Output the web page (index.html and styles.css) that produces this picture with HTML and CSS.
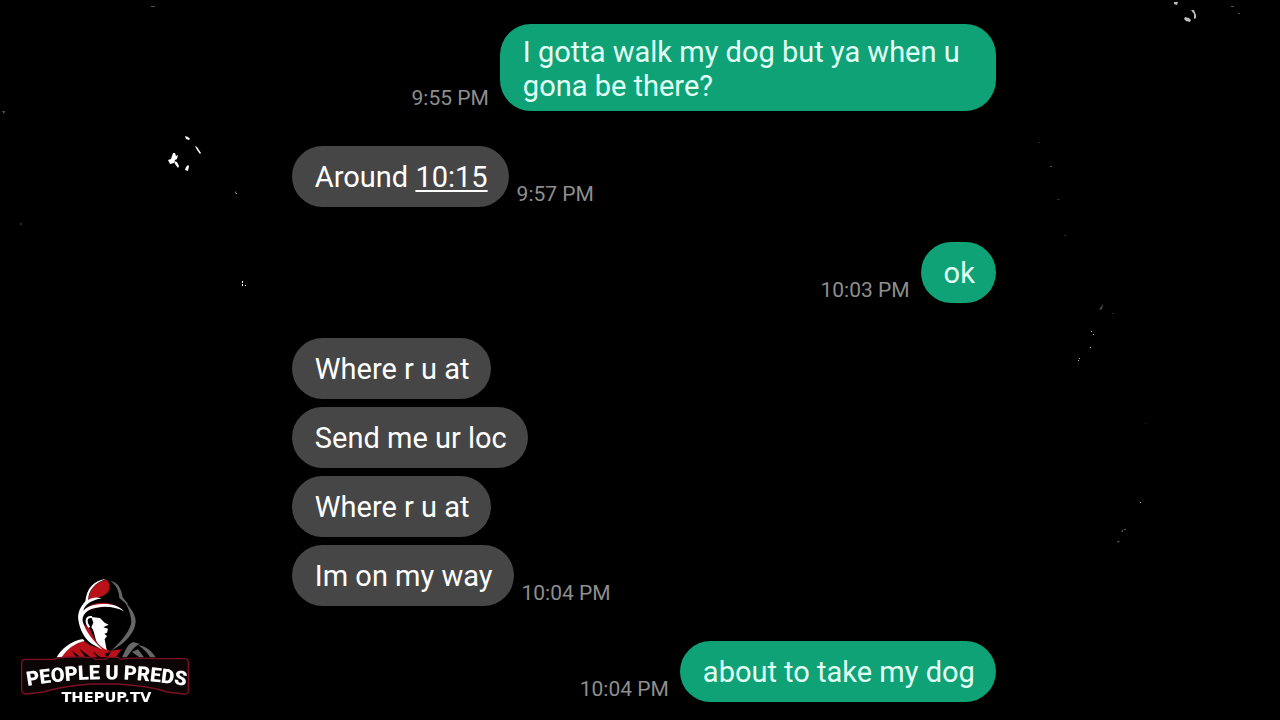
FILE: index.html
```html
<!DOCTYPE html>
<html lang="en">
<head>
    <meta charset="UTF-8">
    <meta name="viewport" content="width=device-width, initial-scale=1.0">
    <title>Messages</title>
    <link rel="stylesheet" href="styles.css">
</head>
<body>
    <!-- Background specks -->
    <svg class="specks" viewBox="0 0 1280 720" preserveAspectRatio="none" aria-hidden="true">
        <g fill="#fff">
            <path d="M173 153l2 0 1 3 2-1-1 4-2 1-1 3-4 1-2-4 3-1z"/>
            <path d="M174 161l3 1 2 4-1 2-3-4z"/>
            <path d="M185 136l3 1 2 2-1 1-3-1z"/>
            <path d="M195 146l2 1 4 6-1 1-3-4z"/>
            <path d="M188 165l1 1-1 5-3-1 1-3z"/>
            <path d="M235 191l2 3-1 0z"/>
            <path d="M242 281h1v2h-1zM242 284h1v2h-1zM245 285h1v1h-1z"/>
        </g>
        <g fill="#bbb">
            <path d="M1174 2h4l-1 3-3-1zM1185 17l4 1 2 2-1 2-4-1-2-2z"/>
            <path d="M1191 10l3 0 2 5 0 3-2 1 0-5z"/>
            <path d="M1091 331h1v1h-1zM1093 334h1v1h-1zM1090 347h1v1h-1zM1079 358h1v1h-1zM1078 360h1v1h-1zM1140 502h1v1h-1z"/>
        </g>
        <g fill="#555">
            <path d="M1231 6h3v1h-3zM1238 13h2v1h-2zM1050 166h2v1h-2z"/>
            <path d="M1099 310l4-6-1 5zM1124 529h2v1h-2zM1121 532l2-3v3zM1117 541l3 0-2 2z"/>
            <path d="M151 6h4v1h-4zM2 111h3l-1 3z"/>
        </g>
        <g fill="#2a2a2a">
            <path d="M1038 142h2v1h-2zM1057 199h3v1h-3zM1064 235h2v1h-2zM1112 313h2v1h-2zM1145 423h1v1h-1zM20 223h2v2h-2z"/>
        </g>
    </svg>

    <main class="chat">
        <div class="row sent">
            <time>9:55 PM</time>
            <p class="bubble">I gotta walk my dog but ya when u gona be there?</p>
        </div>

        <div class="row">
            <p class="bubble">Around <a href="#">10:15</a></p>
            <time>9:57 PM</time>
        </div>

        <div class="row sent">
            <time>10:03 PM</time>
            <p class="bubble">ok</p>
        </div>

        <div class="group">
            <div class="row">
                <p class="bubble">Where r u at</p>
            </div>
            <div class="row">
                <p class="bubble">Send me ur loc</p>
            </div>
            <div class="row">
                <p class="bubble">Where r u at</p>
            </div>
            <div class="row">
                <p class="bubble">Im on my way</p>
                <time>10:04 PM</time>
            </div>
        </div>

        <div class="row sent">
            <time>10:04 PM</time>
            <p class="bubble">about to take my dog</p>
        </div>
    </main>

    <!-- Channel logo -->
    <svg class="logo" viewBox="0 0 570 435" role="img" aria-label="People U Preds, thepup.tv">
        <!-- Shoulders -->
        <path fill="#b9101a" d="M150 262C165 240 190 220 222 213L240 226 296 243 334 238 318 262z"/>
        <path fill="#fff" d="M140 262C155 235 182 214 218 207L224 213C194 220 172 236 155 262z"/>
        <path fill="#000" d="M186 242L212 262H198zM208 236L242 262H226zM248 244L272 262H262zM284 252L304 244 292 262z"/>
        <path fill="#666" d="M336 262C346 242 352 222 370 216L390 222C374 228 366 240 350 262zM366 246L384 238 402 262H388zM384 226C408 228 426 244 437 262H420C412 248 400 236 384 226z"/>
        <!-- Hood -->
        <path fill="#b9101a" d="M234 90C238 62 254 36 290 29C302 42 300 56 294 66C284 80 262 82 234 90zM220 124C240 98 282 88 326 110C290 106 250 110 220 130z"/>
        <path fill="#b9101a" d="M216 160L240 176 252 204 266 226 288 236 300 244 280 242C246 224 226 196 216 160z"/>
        <path fill="#fff" d="M290 26C250 31 230 56 226 94C210 112 202 130 205 150C210 180 222 204 246 222L278 239C244 208 226 182 218 154C216 138 226 126 242 118C272 106 314 108 342 124C322 100 284 98 248 106C236 109 226 116 220 122C224 106 242 90 276 85C258 80 244 84 234 90C236 60 254 38 290 26z"/>
        <path fill="#666" d="M300 32C324 36 334 56 338 82L356 104 346 100 328 84C326 58 318 44 300 32zM342 94C362 112 378 136 377 156C374 190 346 220 304 242C330 216 356 190 364 158C364 140 356 112 342 94z"/>
        <!-- Face -->
        <path fill="#fff" d="M244 141L270 144 284 158 296 164 280 172 294 176 291 188 283 191 291 198 284 208 290 240C270 230 262 222 257 208C253 194 252 182 244 172L250 158z"/>
        <path fill="none" stroke="#fff" stroke-width="6" d="M246 141C226 138 226 158 238 172"/>

        <!-- Name plate -->
        <path fill="#0b0506" stroke="#7d1023" stroke-width="4" stroke-linejoin="round" d="M46 268H130Q160 258 248 262L256 268H286L294 262H324L332 268Q350 262 450 266H524Q535 267 535 278V362Q535 374 522 372L470 366Q430 350 324 342H240Q150 350 100 366L48 372Q35 372 35 360V280Q35 268 46 268z"/>
        <path id="name-arc" fill="none" d="M30 352Q285 304 550 352"/>
        <text class="logo-name"><textPath href="#name-arc" startOffset="50%">PEOPLE U PREDS</textPath></text>
        <text class="logo-site" x="289" y="395">THEPUP.TV</text>
    </svg>
</body>
</html>
```
FILE: styles.css
```css
* {
    margin: 0;
    padding: 0;
    box-sizing: border-box;
}

body {
    background: #000;
    color: white;
    font-family: Roboto, sans-serif;
}

/* Background */
.specks {
    position: absolute;
    top: 0;
    left: 0;
    width: 100%;
    height: 100%;
    z-index: -1;
}

/* Conversation */
.chat {
    display: flex;
    flex-direction: column;
    gap: 35px;
    padding: 24px 22.2% 18px 22.8%;
}

.group {
    display: flex;
    flex-direction: column;
    gap: 8px;
}

.row {
    display: flex;
    align-items: flex-end;
    gap: 8px;
}

.sent {
    justify-content: flex-end;
    gap: 11px;
}

.bubble {
    min-height: 61px;
    max-width: 496px;
    padding: 14px 21px 13px 23px;
    background: #464646;
    border-radius: 31px;
    font-size: 29px;
    line-height: 34px;
}

.bubble a {
    color: inherit;
    text-decoration-thickness: 2px;
    text-underline-offset: 3px;
}

.sent .bubble {
    background: #0fa276;
    color: #e2fff4;
}

.sent:first-child .bubble {
    padding-top: 11px;
    padding-bottom: 8px;
}

time {
    color: #8e8e8e;
    font-size: 21px;
    line-height: 26px;
    white-space: nowrap;
}

/* Logo */
.logo {
    position: fixed;
    left: 10px;
    bottom: 5px;
    width: 190px;
    height: 145px;
}

.logo-name,
.logo-site {
    fill: white;
    font-weight: 900;
    text-anchor: middle;
}

.logo-name {
    font-size: 60px;
}

.logo-site {
    font-family: "DejaVu Sans", sans-serif;
    font-size: 44px;
}
```
